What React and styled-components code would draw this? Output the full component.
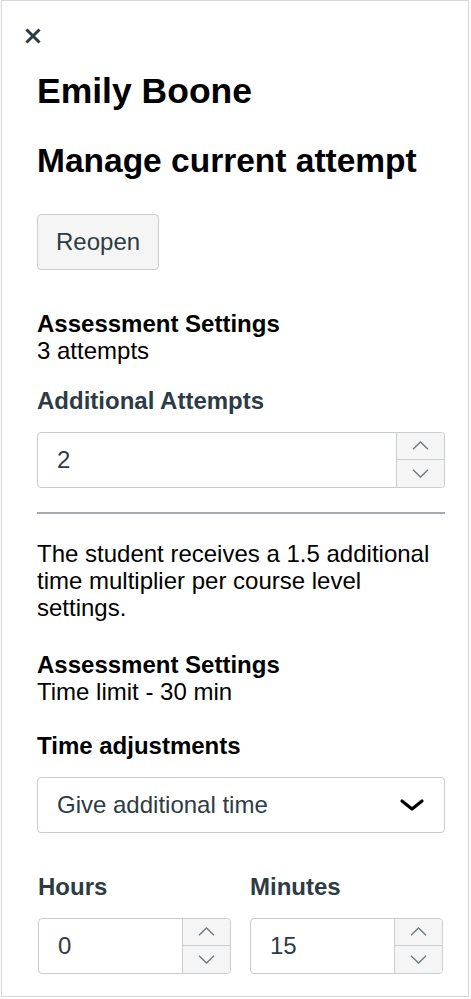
import React from "react";
import styled, { createGlobalStyle } from "styled-components";

const Global = createGlobalStyle`
  html, body { margin: 0; padding: 0; background: #fff; }
  body { font-family: "Liberation Sans", Arial, Helvetica, sans-serif; }
  * { box-sizing: border-box; }
`;

const Panel = styled.aside`
  margin-left: 1px;
  width: 468px;
  height: 997px;
  border: 1px solid #d5d9dc;
  box-shadow: 0 1px 2px rgba(0, 0, 0, 0.06);
  padding: 27px 23px 0 35px;
  color: #000;
`;

const CloseButton = styled.button`
  display: block;
  width: 16px;
  height: 16px;
  margin-left: -12px;
  padding: 0;
  border: 0;
  background: none;
  color: #2d3b45;
  cursor: pointer;
  svg { display: block; }
`;

const Title = styled.h1`
  margin: 27px 0 0;
  font-size: 35.5px;
  line-height: 40px;
  font-weight: 700;
`;

const Subtitle = styled.h2`
  margin: 31.5px 0 0;
  font-size: 33.5px;
  line-height: 36px;
  font-weight: 700;
`;

const Button = styled.button`
  display: block;
  margin-top: 35px;
  height: 56px;
  padding: 0 18px;
  border: 1px solid #c7cdd1;
  border-radius: 4px;
  background: #f5f5f5;
  color: #2d3b45;
  font-family: inherit;
  font-size: 24px;
  line-height: 27px;
`;

const Info = styled.div`
  margin-top: ${(p) => p.$mt}px;
  font-size: 24px;
  line-height: 27px;
`;

const InfoTitle = styled.div`
  font-weight: 700;
`;

const Label = styled.label`
  display: block;
  margin-top: ${(p) => p.$mt || 0}px;
  font-size: 24px;
  line-height: 27px;
  font-weight: 700;
  color: ${(p) => (p.$dark ? "#000" : "#2d3b45")};
`;

const NumberBox = styled.div`
  margin-top: 18px;
  height: 56px;
  display: flex;
  border: 1px solid #c7cdd1;
  border-radius: 4px;
  overflow: hidden;
  background: #fff;
`;

const NumberValue = styled.div`
  flex: 1;
  display: flex;
  align-items: center;
  padding-left: 19px;
  font-size: 24px;
  color: #2d3b45;
`;

const Spinner = styled.div`
  width: 48px;
  display: flex;
  flex-direction: column;
  border-left: 1px solid #c7cdd1;
  background: #f5f5f5;
`;

const SpinButton = styled.div`
  flex: 1;
  display: flex;
  align-items: center;
  justify-content: center;
  color: #6b7780;
  & + & { border-top: 1px solid #c7cdd1; }
`;

const Divider = styled.hr`
  margin: 24px 0 0;
  border: 0;
  height: 2px;
  background: #a3abb1;
`;

const Paragraph = styled.p`
  margin: 26px 0 0;
  font-size: 24px;
  line-height: 27px;
`;

const Select = styled.div`
  margin-top: 18px;
  height: 56px;
  display: flex;
  align-items: center;
  justify-content: space-between;
  padding: 0 19px 0 19px;
  border: 1px solid #c7cdd1;
  border-radius: 4px;
  font-size: 24px;
  color: #2d3b45;
`;

const Row = styled.div`
  margin-top: 40px;
  padding-left: 1px;
  display: grid;
  grid-template-columns: 193px 193px;
  column-gap: 19px;
`;

const Field = styled.div`
  display: flex;
  flex-direction: column;
`;

const NumberField = ({ value }) => (
  <NumberBox>
    <NumberValue>{value}</NumberValue>
    <Spinner>
      <SpinButton>
        <svg width="17" height="9" viewBox="0 0 17 9" fill="none" stroke="currentColor" strokeWidth="1.3">
          <path d="M1 8.2 L8.5 1 L16 8.2" />
        </svg>
      </SpinButton>
      <SpinButton>
        <svg width="17" height="9" viewBox="0 0 17 9" fill="none" stroke="currentColor" strokeWidth="1.3">
          <path d="M1 0.8 L8.5 8 L16 0.8" />
        </svg>
      </SpinButton>
    </Spinner>
  </NumberBox>
);

export default function App() {
  return (
    <>
      <Global />
      <Panel>
        <CloseButton aria-label="Close">
          <svg width="16" height="16" viewBox="0 0 16 16" fill="none" stroke="currentColor" strokeWidth="3" strokeLinecap="square">
            <path d="M2.5 2.5 L13.5 13.5 M13.5 2.5 L2.5 13.5" />
          </svg>
        </CloseButton>
        <Title>Emily Boone</Title>
        <Subtitle>Manage current attempt</Subtitle>
        <Button>Reopen</Button>
        <Info $mt={40}>
          <InfoTitle>Assessment Settings</InfoTitle>
          <div>3 attempts</div>
        </Info>
        <Label $mt={23}>Additional Attempts</Label>
        <NumberField value="2" />
        <Divider />
        <Paragraph>
          The student receives a 1.5 additional time multiplier per course level settings.
        </Paragraph>
        <Info $mt={30}>
          <InfoTitle>Assessment Settings</InfoTitle>
          <div>Time limit - 30 min</div>
        </Info>
        <Label $mt={27} $dark>Time adjustments</Label>
        <Select>
          <span>Give additional time</span>
          <svg width="26" height="14" viewBox="0 0 26 14" fill="none" stroke="#000" strokeWidth="3.2" strokeLinecap="round" strokeLinejoin="round">
            <path d="M3 3 L13 11 L23 3" />
          </svg>
        </Select>
        <Row>
          <Field>
            <Label>Hours</Label>
            <NumberField value="0" />
          </Field>
          <Field>
            <Label>Minutes</Label>
            <NumberField value="15" />
          </Field>
        </Row>
      </Panel>
    </>
  );
}
